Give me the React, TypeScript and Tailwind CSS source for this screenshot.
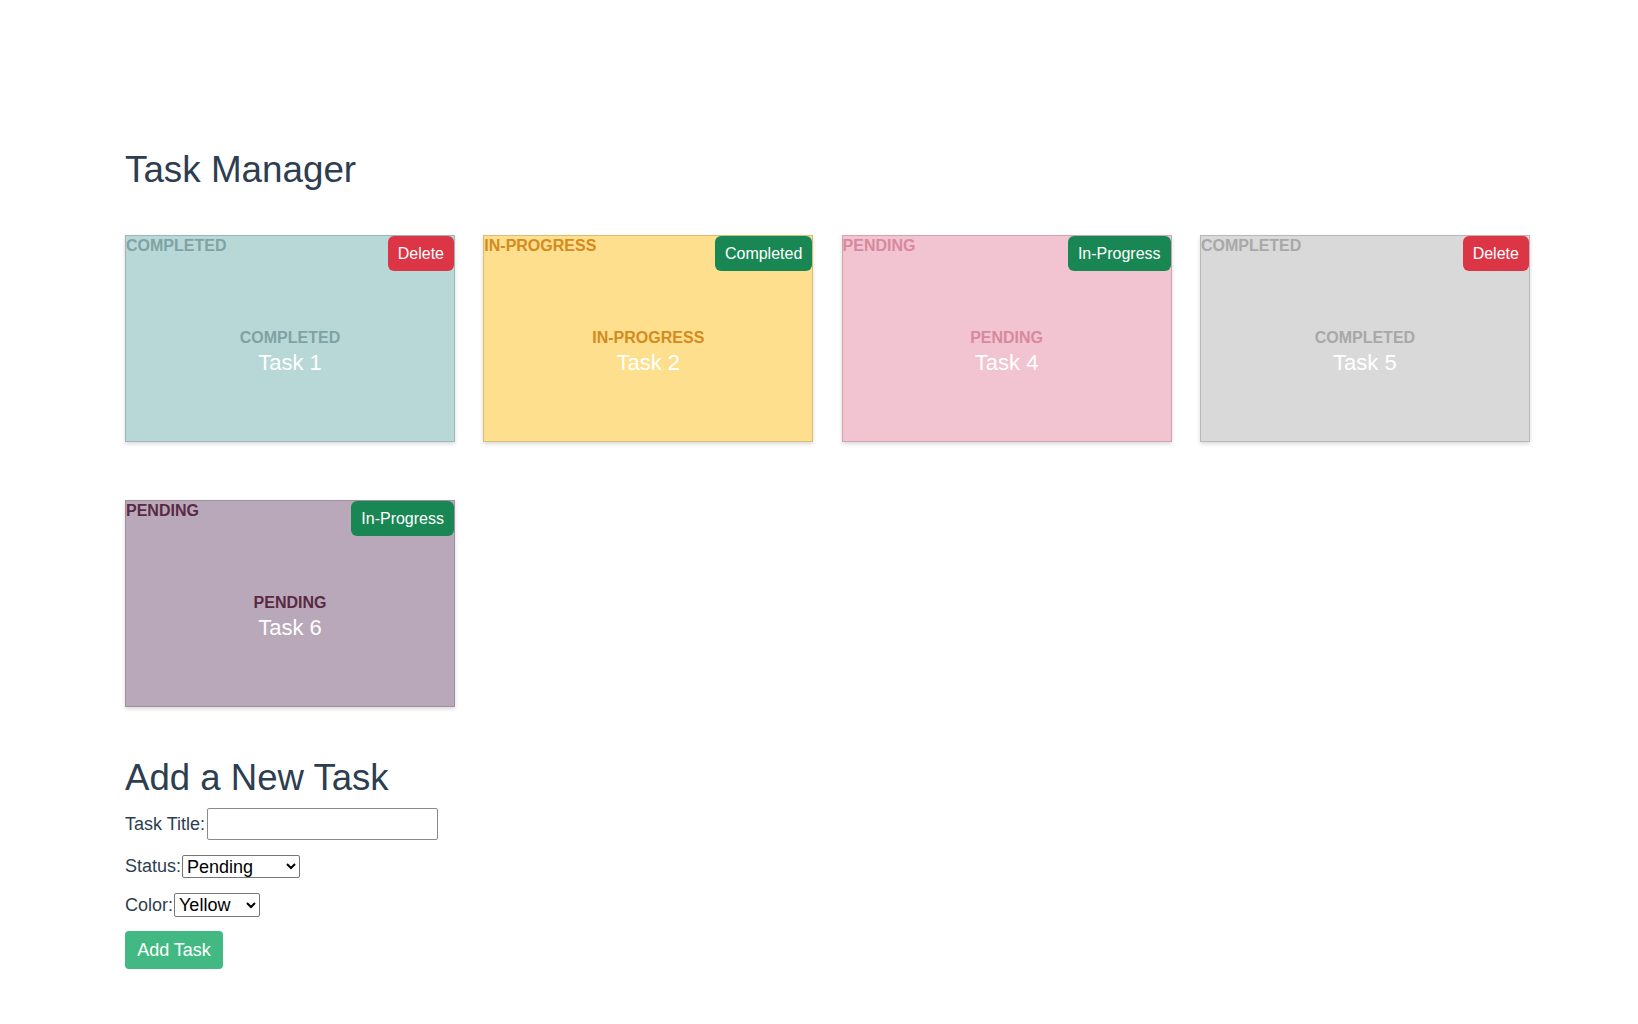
import React from "react";

type Task = {
  id: number;
  title: string;
  status: string;
  bg: string;
  labelColor: string;
  action: "delete" | "completed" | "progress";
};

const tasks: Task[] = [
  { id: 1, title: "Task 1", status: "COMPLETED", bg: "bg-[#b8d8d8]", labelColor: "text-[#7fa2a3]", action: "delete" },
  { id: 2, title: "Task 2", status: "IN-PROGRESS", bg: "bg-[#fddf8d]", labelColor: "text-[#d58a1e]", action: "completed" },
  { id: 4, title: "Task 4", status: "PENDING", bg: "bg-[#f2c3d0]", labelColor: "text-[#d7899e]", action: "progress" },
  { id: 5, title: "Task 5", status: "COMPLETED", bg: "bg-[#d9d9d9]", labelColor: "text-[#a8a8a8]", action: "delete" },
  { id: 6, title: "Task 6", status: "PENDING", bg: "bg-[#b9a8b9]", labelColor: "text-[#5a2a44]", action: "progress" },
];

function ActionButton({ action }: { action: Task["action"] }) {
  if (action === "delete") {
    return (
      <button className="absolute top-0 right-0 h-[35px] px-[10px] rounded-[6px] bg-[#dc3545] text-white text-[16px] leading-[18px]">
        Delete
      </button>
    );
  }
  return (
    <button className="absolute top-0 right-0 h-[35px] px-[10px] rounded-[6px] bg-[#198754] text-white text-[16px] leading-[18px]">
      {action === "completed" ? "Completed" : "In-Progress"}
    </button>
  );
}

function Card({ task }: { task: Task }) {
  return (
    <div
      className={`relative flex flex-col w-[330px] h-[207px] border border-black/15 shadow-[0_2px_4px_rgba(0,0,0,0.15)] ${task.bg}`}
    >
      <div className={`pt-[1px] text-[16px] font-bold leading-[18.4px] ${task.labelColor}`}>{task.status}</div>
      <ActionButton action={task.action} />
      <div className="flex-1 pt-[7px] flex flex-col items-center justify-center">
        <div className={`text-[16px] font-bold leading-[18.4px] ${task.labelColor}`}>{task.status}</div>
        <div className="mt-[2px] text-[22px] leading-[25px] text-white">{task.title}</div>
      </div>
    </div>
  );
}

export default function App() {
  return (
    <div
      className="min-h-screen bg-white text-[#2c3e50] pl-[125px] pt-[149px] pb-[40px]"
      style={{ fontFamily: '"Liberation Sans", Arial, Helvetica, sans-serif' }}
    >
      <h1 className="text-[36.8px] leading-[41.4px] font-normal">Task Manager</h1>
      <div className="mt-[45px] grid grid-cols-[repeat(4,330px)] gap-x-[28.3px] gap-y-[58px]">
        {tasks.map((t) => (
          <Card key={t.id} task={t} />
        ))}
      </div>
      <h2 className="mt-[50px] text-[36.6px] leading-[41.4px] font-normal">Add a New Task</h2>
      <div className="mt-[9.5px] flex flex-col">
        <div className="flex items-center h-[32px] text-[18px]">
          <label>Task Title:</label>
          <input
            type="text"
            className="ml-[2px] w-[231px] h-[32px] border border-[#8a8a8a] rounded-[2px] bg-white px-[4px] text-[18px] text-black"
          />
        </div>
        <div className="mt-[15px] flex items-center h-[23px] text-[18px]">
          <label>Status:</label>
          <select
            defaultValue="Pending"
            className="ml-[1px] w-[118px] h-[23px] border border-[#767676] rounded-[2px] bg-white text-[18px] leading-[20px] text-black"
          >
            <option>Pending</option>
            <option>In-Progress</option>
            <option>Completed</option>
          </select>
        </div>
        <div className="mt-[15px] flex items-center h-[24px] text-[18px]">
          <label>Color:</label>
          <select
            defaultValue="Yellow"
            className="ml-[1px] w-[86px] h-[24px] border border-[#767676] rounded-[2px] bg-white text-[18px] leading-[20px] text-black"
          >
            <option>Yellow</option>
            <option>Teal</option>
            <option>Pink</option>
            <option>Gray</option>
            <option>Purple</option>
          </select>
        </div>
        <div className="mt-[14px]">
          <button className="h-[38px] w-[98px] rounded-[4px] bg-[#42b983] text-white text-[18px] leading-[20px]">
            Add Task
          </button>
        </div>
      </div>
    </div>
  );
}
